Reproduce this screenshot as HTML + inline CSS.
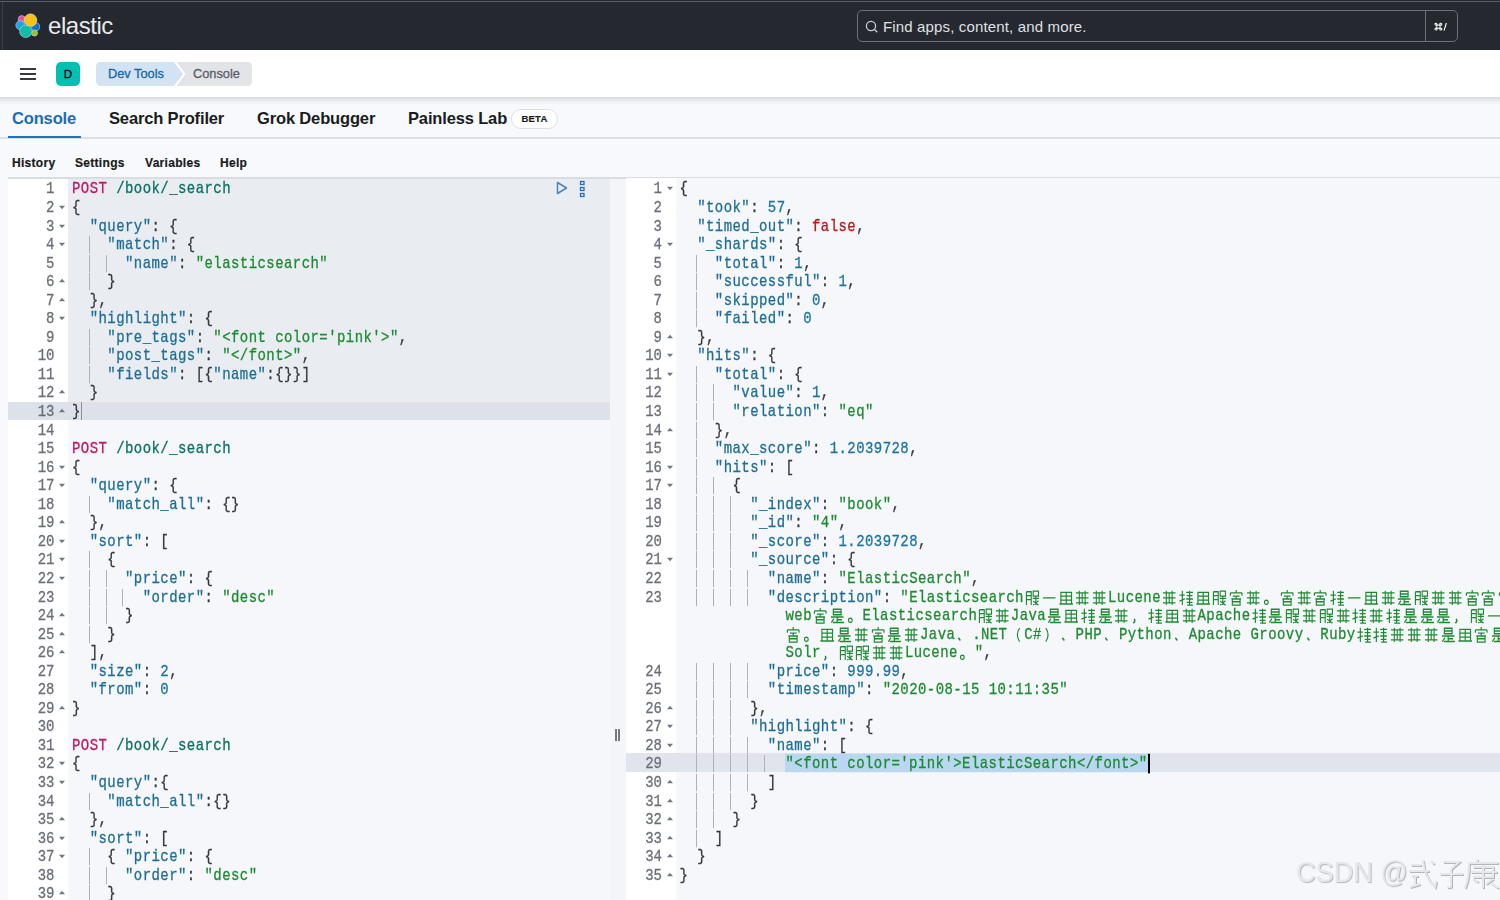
<!DOCTYPE html>
<html><head><meta charset="utf-8">
<style>
*{margin:0;padding:0;box-sizing:border-box}
html,body{width:1500px;height:900px;overflow:hidden;background:#f8f9fc;font-family:"Liberation Sans",sans-serif;position:relative}
.abs{position:absolute}
#hdr{position:absolute;left:0;top:0;width:1500px;height:50px;background:#25282f}
#hdr .topline{position:absolute;left:0;top:1px;width:1500px;height:1.2px;background:#5a5d63}
#hdr .leftline{position:absolute;left:1.5px;top:2px;width:1px;height:48px;background:#3a3d44}
#logo-t{position:absolute;left:48px;top:12px;font-size:24px;color:#e9eaec;letter-spacing:-0.45px}
#search{position:absolute;left:857px;top:10px;width:601px;height:32px;border:1.4px solid #6c7079;border-radius:5px;background:#25282f}
#search .div{position:absolute;left:567px;top:0;width:1.4px;height:100%;background:#6c7079}
#search .ph{position:absolute;left:25px;top:7px;font-size:15px;letter-spacing:0.15px;color:#dfe1e5}
#search .kbd{position:absolute;left:576px;top:7px;font-size:12px;color:#fff;font-weight:bold}
#sub{position:absolute;left:0;top:50px;width:1500px;height:47px;background:#fff;}
#shadow{position:absolute;left:0;top:97px;width:1500px;height:8px;background:linear-gradient(to bottom,rgba(40,45,60,.16) 0,rgba(40,45,60,.10) 2px,rgba(40,45,60,.04) 5px,rgba(40,45,60,0) 8px)}
.ham{position:absolute;left:20px;width:16px;height:2px;background:#37393f;margin-top:-0.2px}
#dbadge{position:absolute;left:56px;top:62px;width:24px;height:24px;border-radius:5px;background:#00bfb3;color:#000;font-size:11.6px;-webkit-text-stroke:0.35px #000;text-align:center;line-height:24px}
.crumb{position:absolute;top:62px;height:24px;line-height:24px;font-size:12.8px;-webkit-text-stroke:0.3px currentColor}
#tabs .t{position:absolute;top:109px;letter-spacing:-0.15px;font-size:16.5px;font-weight:bold;color:#1a1c21}
#tabs .on{color:#0b64dd;color:#1a6db8}
#tabline{position:absolute;left:0;top:137px;width:1500px;height:1.5px;background:#dcdfe4}
#tabul{position:absolute;left:8px;top:136px;width:73px;height:2px;background:#1a74c6}
#beta{position:absolute;left:511px;top:109px;width:47px;height:20px;border:1px solid #dcdfe5;border-radius:10px;background:#fff;font-size:9.5px;font-weight:bold;text-align:center;line-height:18px;letter-spacing:0.2px;color:#1a1c21;-webkit-text-stroke:0.2px #1a1c21}
.menu{position:absolute;top:155.5px;font-size:12px;letter-spacing:0.3px;-webkit-text-stroke:0.2px #1a1c21;font-weight:bold;color:#1a1c21}
/* editors */
.ed{position:absolute;top:177px;height:723px;overflow:hidden;border-top:1px solid #d9dce1}
#edtop{position:absolute;left:8px;top:177px;width:1492px;height:1.5px;background:#d9dce1}
#gap{position:absolute;left:610px;top:178px;width:16px;height:722px;background:#f3f5f9}
#edL{left:8px;width:602px;background:#f5f7fa}
#edR{left:626px;width:874px;background:#f5f7fa}
.gut{position:absolute;top:0;left:0;height:100%;background:#fff}
#edL .gut{width:60px}
#edR .gut{width:50px}
.lines{position:absolute;left:0;top:-177px;width:100%}
.ln{position:absolute;left:0;height:18.55px;line-height:18.55px;font-family:"Liberation Mono",monospace;font-size:14px;color:#6b6f77;white-space:pre}
.cl{position:absolute;height:18.55px;line-height:18.55px;font-family:"Liberation Mono",monospace;font-size:14px;letter-spacing:0.43px;color:#343741;white-space:pre}
#edL .ln{width:60px}
#edR .ln{width:50px}
#edL .num{position:absolute;right:13.5px}
#edR .num{position:absolute;right:14px}
.cl,.ln{transform:scaleY(1.15);transform-origin:50% 9px;-webkit-text-stroke:0.25px currentColor}
#edL .cl{left:64px}
#edR .cl{left:53.5px}
.f{position:absolute;right:3.5px;top:7.5px;width:0;height:0;border-left:3px solid transparent;border-right:3px solid transparent}
.f.d{border-top:3.5px solid #72767d}
.f.u{border-bottom:3.5px solid #72767d;top:6.5px}
.g{position:absolute;top:1.6px;width:1px;height:15.3px;background:#aeb2b8}
.k{color:#1f6d94}
.s{color:#1d8a31}
.n{color:#1c73a1}
.b{color:#b21818}
.m{color:#bf1863}
.u{color:#0b6f60}
.cj{display:inline-block;width:16.43px;height:18.55px;vertical-align:top;margin-right:0.4px}
.sel{background:#b9d7f0}
.cur{display:inline-block;width:2px;height:17px;background:#000;vertical-align:top;margin-top:1px}
#reqblk{position:absolute;left:60px;top:0;width:542px;height:241.15px;background:#e9edf2}
#actL{position:absolute;left:0;top:223.6px;width:602px;height:18.55px;background:#dde2ea}
#actR{position:absolute;left:0;top:575.1px;width:874px;height:18.55px;background:#e0e4ec}
#resz .bar{position:absolute;top:729px;width:1.7px;height:11.5px;background:#74787f}
#wm{position:absolute;left:1296px;top:856px;font-size:29px;transform:scaleX(0.935);transform-origin:0 0;color:#e6e7ea;text-shadow:1px 1px 1px #b4b5b9;white-space:nowrap}
</style></head><body>
<svg width="0" height="0" style="position:absolute">
<defs>
<symbol id="c0" viewBox="0 0 17 18"><path d="M2 9.5H15" stroke="currentColor" stroke-width="1.3" fill="none"/></symbol>
<symbol id="c1" viewBox="0 0 17 18"><path d="M3 4.5H14V15H3Z M3 8H14 M3 11.5H14 M8.5 4.5V15 M1.5 15H15.5" stroke="currentColor" stroke-width="1.2" fill="none"/></symbol>
<symbol id="c2" viewBox="0 0 17 18"><path d="M4.5 3.5H12.5V8.5H4.5Z M4.5 6H12.5 M2 10.5H15 M8.5 10.5V15.5 M8.5 13H13.5 M5 12L2.5 15.5 M4 15.5H15.5" stroke="currentColor" stroke-width="1.25" fill="none"/></symbol>
<symbol id="c3" viewBox="0 0 17 18"><path d="M4.5 3V16 M1.5 7H7 M1.5 12.5L7 10.5 M8.5 4.5H15.5 M12 3V7 M9 7.5H15 M8.5 10.5H15.5 M12 7.5V16 M9 13.5H15 M9.5 16H15.5" stroke="currentColor" stroke-width="1.2" fill="none"/></symbol>
<symbol id="c4" viewBox="0 0 17 18"><path d="M8.5 2.5V4.5 M2.5 5H14.5 M2.5 5V7.5 M14.5 5V7.5 M5 8H12 M8.5 8V10 M3.5 10.5H13.5 M4.5 10.5V16H12.5V10.5 M4.5 13H12.5" stroke="currentColor" stroke-width="1.2" fill="none"/></symbol>
<symbol id="c5" viewBox="0 0 17 18"><path d="M2 5H15 M2 9.5H15 M2 14H15 M5.5 3V16 M11.5 3V16 M8.5 5V14" stroke="currentColor" stroke-width="1.15" fill="none"/></symbol>
<symbol id="c6" viewBox="0 0 17 18"><path d="M2.5 4H7.5V16 M2.5 4V16 M2.5 7.5H7.5 M2.5 11H7.5 M9.5 3.5H15V8H9.5Z M9 10H15.5 M12.2 8V16 M9.5 16L15 12 M9.5 12.5L15 16" stroke="currentColor" stroke-width="1.15" fill="none"/></symbol>
<symbol id="cp" viewBox="0 0 17 18"><circle cx="4.5" cy="13.5" r="1.9" stroke="currentColor" stroke-width="1.1" fill="none"/></symbol>
<symbol id="cc" viewBox="0 0 17 18"><path d="M4 12.5Q5.5 13 4.8 14.5L3.5 16" stroke="currentColor" stroke-width="1.5" fill="none"/></symbol>
<symbol id="ct" viewBox="0 0 17 18"><path d="M3.5 12L5.5 14.5" stroke="currentColor" stroke-width="1.5" fill="none"/></symbol>
<symbol id="lp" viewBox="0 0 17 18"><path d="M13 3.5Q8.5 9.5 13 15.5" stroke="currentColor" stroke-width="1.2" fill="none"/></symbol>
<symbol id="rp" viewBox="0 0 17 18"><path d="M4 3.5Q8.5 9.5 4 15.5" stroke="currentColor" stroke-width="1.2" fill="none"/></symbol>
</defs></svg>
<div id="hdr">
  <div class="topline"></div><div class="leftline"></div>
  <svg style="position:absolute;left:0;top:0" width="50" height="50">
    <g stroke="#cfe9f3" stroke-width="0.6" stroke-opacity="0.8">
    <circle cx="21.7" cy="19.2" r="3.6" fill="#e8509a"/>
    <circle cx="20.4" cy="25.3" r="4.6" fill="#1ea5e8"/>
    <circle cx="35.6" cy="26.8" r="4.1" fill="#0f72cc"/>
    <circle cx="34.5" cy="33" r="3.1" fill="#9bc21c"/>
    <circle cx="30.5" cy="20.2" r="6.4" fill="#f9c11b"/>
    <circle cx="25.8" cy="31.4" r="6.2" fill="#13bba9"/>
    </g>
  </svg>
  <div id="logo-t">elastic</div>
  <div id="search"><svg style="position:absolute;left:7px;top:9px" width="14" height="14" viewBox="0 0 14 14"><circle cx="6" cy="6" r="4.6" fill="none" stroke="#c9ccd2" stroke-width="1.3"/><path d="M9.3 9.3 L12.3 12.3" stroke="#c9ccd2" stroke-width="1.3"/></svg><div class="ph">Find apps, content, and more.</div><div class="div"></div><svg style="position:absolute;left:576px;top:11px" width="16" height="10" viewBox="0 0 20 12"><g fill="none" stroke="#fff" stroke-width="1.3"><path d="M3.5 3.5H7.5V7.5H3.5Z"/><circle cx="2.5" cy="2.5" r="1.3"/><circle cx="8.5" cy="2.5" r="1.3"/><circle cx="2.5" cy="8.5" r="1.3"/><circle cx="8.5" cy="8.5" r="1.3"/></g><path d="M15.5 1L12.5 10.5" stroke="#fff" stroke-width="1.4"/></svg></div>
</div>
<div id="sub"></div><div id="shadow"></div>
<div class="ham" style="top:68px"></div><div class="ham" style="top:73px"></div><div class="ham" style="top:78px"></div>
<div id="dbadge">D</div>
<svg style="position:absolute;left:96px;top:62px" width="160" height="24">
  <path d="M5 0 H78 L87 12 L78 24 H5 Q0 24 0 19 V5 Q0 0 5 0Z" fill="#d2e4f3"/>
  <path d="M80.5 0 H151 Q156 0 156 5 V19 Q156 24 151 24 H80.5 L89.5 12 Z" fill="#e3e4e8"/>
</svg>
<div class="crumb" style="left:108px;color:#1a64a8">Dev Tools</div>
<div class="crumb" style="left:193px;color:#5a606b">Console</div>
<div id="tabs">
 <div class="t on" style="left:12px">Console</div>
 <div class="t" style="left:109px">Search Profiler</div>
 <div class="t" style="left:257px">Grok Debugger</div>
 <div class="t" style="left:408px">Painless Lab</div>
</div>
<div id="beta">BETA</div>
<div id="tabline"></div><div id="tabul"></div>
<div class="menu" style="left:12px">History</div>
<div class="menu" style="left:75px">Settings</div>
<div class="menu" style="left:145px">Variables</div>
<div class="menu" style="left:220px">Help</div>

<div id="edL" class="ed">
 <div id="reqblk"></div>
 <div class="gut"></div>
 <div id="actL"></div><div style="position:absolute;left:73px;top:224px;width:1.3px;height:18px;background:#8a8e95"></div>
 <div class="lines">
<div class="ln" style="top:178.40px"><span class="num">1</span></div>
<div class="cl" style="top:178.40px"><span class="m">POST</span> <span class="u">/book/_search</span></div>
<div class="ln" style="top:196.95px"><span class="num">2</span><b class="f d"></b></div>
<div class="cl" style="top:196.95px">{</div>
<div class="ln" style="top:215.50px"><span class="num">3</span><b class="f d"></b></div>
<div class="cl" style="top:215.50px">  <span class="k">&quot;query&quot;</span>: {</div>
<div class="ln" style="top:234.05px"><span class="num">4</span><b class="f d"></b></div>
<div class="cl" style="top:234.05px"><i class="g" style="left:16.7px"></i>    <span class="k">&quot;match&quot;</span>: {</div>
<div class="ln" style="top:252.60px"><span class="num">5</span></div>
<div class="cl" style="top:252.60px"><i class="g" style="left:16.7px"></i><i class="g" style="left:33.5px"></i>      <span class="k">&quot;name&quot;</span>: <span class="s">&quot;elasticsearch&quot;</span></div>
<div class="ln" style="top:271.15px"><span class="num">6</span><b class="f u"></b></div>
<div class="cl" style="top:271.15px"><i class="g" style="left:16.7px"></i>    }</div>
<div class="ln" style="top:289.70px"><span class="num">7</span><b class="f u"></b></div>
<div class="cl" style="top:289.70px">  },</div>
<div class="ln" style="top:308.25px"><span class="num">8</span><b class="f d"></b></div>
<div class="cl" style="top:308.25px">  <span class="k">&quot;highlight&quot;</span>: {</div>
<div class="ln" style="top:326.80px"><span class="num">9</span></div>
<div class="cl" style="top:326.80px"><i class="g" style="left:16.7px"></i>    <span class="k">&quot;pre_tags&quot;</span>: <span class="s">&quot;&lt;font color=&#x27;pink&#x27;&gt;&quot;</span>,</div>
<div class="ln" style="top:345.35px"><span class="num">10</span></div>
<div class="cl" style="top:345.35px"><i class="g" style="left:16.7px"></i>    <span class="k">&quot;post_tags&quot;</span>: <span class="s">&quot;&lt;/font&gt;&quot;</span>,</div>
<div class="ln" style="top:363.90px"><span class="num">11</span></div>
<div class="cl" style="top:363.90px"><i class="g" style="left:16.7px"></i>    <span class="k">&quot;fields&quot;</span>: [{<span class="k">&quot;name&quot;</span>:{}}]</div>
<div class="ln" style="top:382.45px"><span class="num">12</span><b class="f u"></b></div>
<div class="cl" style="top:382.45px">  }</div>
<div class="ln" style="top:401.00px"><span class="num">13</span><b class="f u"></b></div>
<div class="cl" style="top:401.00px">}</div>
<div class="ln" style="top:419.55px"><span class="num">14</span></div>
<div class="cl" style="top:419.55px"></div>
<div class="ln" style="top:438.10px"><span class="num">15</span></div>
<div class="cl" style="top:438.10px"><span class="m">POST</span> <span class="u">/book/_search</span></div>
<div class="ln" style="top:456.65px"><span class="num">16</span><b class="f d"></b></div>
<div class="cl" style="top:456.65px">{</div>
<div class="ln" style="top:475.20px"><span class="num">17</span><b class="f d"></b></div>
<div class="cl" style="top:475.20px">  <span class="k">&quot;query&quot;</span>: {</div>
<div class="ln" style="top:493.75px"><span class="num">18</span></div>
<div class="cl" style="top:493.75px"><i class="g" style="left:16.7px"></i>    <span class="k">&quot;match_all&quot;</span>: {}</div>
<div class="ln" style="top:512.30px"><span class="num">19</span><b class="f u"></b></div>
<div class="cl" style="top:512.30px">  },</div>
<div class="ln" style="top:530.85px"><span class="num">20</span><b class="f d"></b></div>
<div class="cl" style="top:530.85px">  <span class="k">&quot;sort&quot;</span>: [</div>
<div class="ln" style="top:549.40px"><span class="num">21</span><b class="f d"></b></div>
<div class="cl" style="top:549.40px"><i class="g" style="left:16.7px"></i>    {</div>
<div class="ln" style="top:567.95px"><span class="num">22</span><b class="f d"></b></div>
<div class="cl" style="top:567.95px"><i class="g" style="left:16.7px"></i><i class="g" style="left:33.5px"></i>      <span class="k">&quot;price&quot;</span>: {</div>
<div class="ln" style="top:586.50px"><span class="num">23</span></div>
<div class="cl" style="top:586.50px"><i class="g" style="left:16.7px"></i><i class="g" style="left:33.5px"></i><i class="g" style="left:50.4px"></i>        <span class="k">&quot;order&quot;</span>: <span class="s">&quot;desc&quot;</span></div>
<div class="ln" style="top:605.05px"><span class="num">24</span><b class="f u"></b></div>
<div class="cl" style="top:605.05px"><i class="g" style="left:16.7px"></i><i class="g" style="left:33.5px"></i>      }</div>
<div class="ln" style="top:623.60px"><span class="num">25</span><b class="f u"></b></div>
<div class="cl" style="top:623.60px"><i class="g" style="left:16.7px"></i>    }</div>
<div class="ln" style="top:642.15px"><span class="num">26</span><b class="f u"></b></div>
<div class="cl" style="top:642.15px">  ],</div>
<div class="ln" style="top:660.70px"><span class="num">27</span></div>
<div class="cl" style="top:660.70px">  <span class="k">&quot;size&quot;</span>: <span class="n">2</span>,</div>
<div class="ln" style="top:679.25px"><span class="num">28</span></div>
<div class="cl" style="top:679.25px">  <span class="k">&quot;from&quot;</span>: <span class="n">0</span></div>
<div class="ln" style="top:697.80px"><span class="num">29</span><b class="f u"></b></div>
<div class="cl" style="top:697.80px">}</div>
<div class="ln" style="top:716.35px"><span class="num">30</span></div>
<div class="cl" style="top:716.35px"></div>
<div class="ln" style="top:734.90px"><span class="num">31</span></div>
<div class="cl" style="top:734.90px"><span class="m">POST</span> <span class="u">/book/_search</span></div>
<div class="ln" style="top:753.45px"><span class="num">32</span><b class="f d"></b></div>
<div class="cl" style="top:753.45px">{</div>
<div class="ln" style="top:772.00px"><span class="num">33</span><b class="f d"></b></div>
<div class="cl" style="top:772.00px">  <span class="k">&quot;query&quot;</span>:{</div>
<div class="ln" style="top:790.55px"><span class="num">34</span></div>
<div class="cl" style="top:790.55px"><i class="g" style="left:16.7px"></i>    <span class="k">&quot;match_all&quot;</span>:{}</div>
<div class="ln" style="top:809.10px"><span class="num">35</span><b class="f u"></b></div>
<div class="cl" style="top:809.10px">  },</div>
<div class="ln" style="top:827.65px"><span class="num">36</span><b class="f d"></b></div>
<div class="cl" style="top:827.65px">  <span class="k">&quot;sort&quot;</span>: [</div>
<div class="ln" style="top:846.20px"><span class="num">37</span><b class="f d"></b></div>
<div class="cl" style="top:846.20px"><i class="g" style="left:16.7px"></i>    { <span class="k">&quot;price&quot;</span>: {</div>
<div class="ln" style="top:864.75px"><span class="num">38</span></div>
<div class="cl" style="top:864.75px"><i class="g" style="left:16.7px"></i><i class="g" style="left:33.5px"></i>      <span class="k">&quot;order&quot;</span>: <span class="s">&quot;desc&quot;</span></div>
<div class="ln" style="top:883.30px"><span class="num">39</span><b class="f u"></b></div>
<div class="cl" style="top:883.30px"><i class="g" style="left:16.7px"></i>    }</div>
 </div>
 <svg style="position:absolute;left:548px;top:2px" width="30" height="20">
  <path d="M1.5 2.5 L1.5 13.5 L10.5 8 Z" fill="none" stroke="#4a83c0" stroke-width="1.5" stroke-linejoin="round"/>
  <rect x="24.5" y="1.5" width="3.5" height="3" fill="none" stroke="#2a6db0" stroke-width="1.3"/>
  <rect x="24.5" y="7.5" width="3.5" height="3" fill="none" stroke="#2a6db0" stroke-width="1.3"/>
  <rect x="24.5" y="13.5" width="3.5" height="3" fill="none" stroke="#2a6db0" stroke-width="1.3"/>
 </svg>
</div>
<div id="gap"></div><div id="edtop"></div><div id="resz"><div class="bar" style="left:615px"></div><div class="bar" style="left:618px"></div></div>
<div id="edR" class="ed">
 <div class="gut"></div>
 <div id="actR"></div>
 <div class="lines">
<div class="ln" style="top:178.40px"><span class="num">1</span><b class="f d"></b></div>
<div class="cl" style="top:178.40px">{</div>
<div class="ln" style="top:196.95px"><span class="num">2</span></div>
<div class="cl" style="top:196.95px">  <span class="k">&quot;took&quot;</span>: <span class="n">57</span>,</div>
<div class="ln" style="top:215.50px"><span class="num">3</span></div>
<div class="cl" style="top:215.50px">  <span class="k">&quot;timed_out&quot;</span>: <span class="b">false</span>,</div>
<div class="ln" style="top:234.05px"><span class="num">4</span><b class="f d"></b></div>
<div class="cl" style="top:234.05px">  <span class="k">&quot;_shards&quot;</span>: {</div>
<div class="ln" style="top:252.60px"><span class="num">5</span></div>
<div class="cl" style="top:252.60px"><i class="g" style="left:16.7px"></i>    <span class="k">&quot;total&quot;</span>: <span class="n">1</span>,</div>
<div class="ln" style="top:271.15px"><span class="num">6</span></div>
<div class="cl" style="top:271.15px"><i class="g" style="left:16.7px"></i>    <span class="k">&quot;successful&quot;</span>: <span class="n">1</span>,</div>
<div class="ln" style="top:289.70px"><span class="num">7</span></div>
<div class="cl" style="top:289.70px"><i class="g" style="left:16.7px"></i>    <span class="k">&quot;skipped&quot;</span>: <span class="n">0</span>,</div>
<div class="ln" style="top:308.25px"><span class="num">8</span></div>
<div class="cl" style="top:308.25px"><i class="g" style="left:16.7px"></i>    <span class="k">&quot;failed&quot;</span>: <span class="n">0</span></div>
<div class="ln" style="top:326.80px"><span class="num">9</span><b class="f u"></b></div>
<div class="cl" style="top:326.80px">  },</div>
<div class="ln" style="top:345.35px"><span class="num">10</span><b class="f d"></b></div>
<div class="cl" style="top:345.35px">  <span class="k">&quot;hits&quot;</span>: {</div>
<div class="ln" style="top:363.90px"><span class="num">11</span><b class="f d"></b></div>
<div class="cl" style="top:363.90px"><i class="g" style="left:16.7px"></i>    <span class="k">&quot;total&quot;</span>: {</div>
<div class="ln" style="top:382.45px"><span class="num">12</span></div>
<div class="cl" style="top:382.45px"><i class="g" style="left:16.7px"></i><i class="g" style="left:33.5px"></i>      <span class="k">&quot;value&quot;</span>: <span class="n">1</span>,</div>
<div class="ln" style="top:401.00px"><span class="num">13</span></div>
<div class="cl" style="top:401.00px"><i class="g" style="left:16.7px"></i><i class="g" style="left:33.5px"></i>      <span class="k">&quot;relation&quot;</span>: <span class="s">&quot;eq&quot;</span></div>
<div class="ln" style="top:419.55px"><span class="num">14</span><b class="f u"></b></div>
<div class="cl" style="top:419.55px"><i class="g" style="left:16.7px"></i>    },</div>
<div class="ln" style="top:438.10px"><span class="num">15</span></div>
<div class="cl" style="top:438.10px"><i class="g" style="left:16.7px"></i>    <span class="k">&quot;max_score&quot;</span>: <span class="n">1.2039728</span>,</div>
<div class="ln" style="top:456.65px"><span class="num">16</span><b class="f d"></b></div>
<div class="cl" style="top:456.65px"><i class="g" style="left:16.7px"></i>    <span class="k">&quot;hits&quot;</span>: [</div>
<div class="ln" style="top:475.20px"><span class="num">17</span><b class="f d"></b></div>
<div class="cl" style="top:475.20px"><i class="g" style="left:16.7px"></i><i class="g" style="left:33.5px"></i>      {</div>
<div class="ln" style="top:493.75px"><span class="num">18</span></div>
<div class="cl" style="top:493.75px"><i class="g" style="left:16.7px"></i><i class="g" style="left:33.5px"></i><i class="g" style="left:50.4px"></i>        <span class="k">&quot;_index&quot;</span>: <span class="s">&quot;book&quot;</span>,</div>
<div class="ln" style="top:512.30px"><span class="num">19</span></div>
<div class="cl" style="top:512.30px"><i class="g" style="left:16.7px"></i><i class="g" style="left:33.5px"></i><i class="g" style="left:50.4px"></i>        <span class="k">&quot;_id&quot;</span>: <span class="s">&quot;4&quot;</span>,</div>
<div class="ln" style="top:530.85px"><span class="num">20</span></div>
<div class="cl" style="top:530.85px"><i class="g" style="left:16.7px"></i><i class="g" style="left:33.5px"></i><i class="g" style="left:50.4px"></i>        <span class="k">&quot;_score&quot;</span>: <span class="n">1.2039728</span>,</div>
<div class="ln" style="top:549.40px"><span class="num">21</span><b class="f d"></b></div>
<div class="cl" style="top:549.40px"><i class="g" style="left:16.7px"></i><i class="g" style="left:33.5px"></i><i class="g" style="left:50.4px"></i>        <span class="k">&quot;_source&quot;</span>: {</div>
<div class="ln" style="top:567.95px"><span class="num">22</span></div>
<div class="cl" style="top:567.95px"><i class="g" style="left:16.7px"></i><i class="g" style="left:33.5px"></i><i class="g" style="left:50.4px"></i><i class="g" style="left:67.2px"></i>          <span class="k">&quot;name&quot;</span>: <span class="s">&quot;ElasticSearch&quot;</span>,</div>
<div class="ln" style="top:586.50px"><span class="num">23</span></div>
<div class="cl" style="top:586.50px"><i class="g" style="left:16.7px"></i><i class="g" style="left:33.5px"></i><i class="g" style="left:50.4px"></i><i class="g" style="left:67.2px"></i>          <span class="k">"description"</span>: <span class="s">&quot;Elasticsearch</span><svg class="cj s" viewBox="0 0 17 18"><use href="#c6"/></svg><svg class="cj s" viewBox="0 0 17 18"><use href="#c0"/></svg><svg class="cj s" viewBox="0 0 17 18"><use href="#c1"/></svg><svg class="cj s" viewBox="0 0 17 18"><use href="#c5"/></svg><svg class="cj s" viewBox="0 0 17 18"><use href="#c5"/></svg><span class="s">Lucene</span><svg class="cj s" viewBox="0 0 17 18"><use href="#c5"/></svg><svg class="cj s" viewBox="0 0 17 18"><use href="#c3"/></svg><svg class="cj s" viewBox="0 0 17 18"><use href="#c1"/></svg><svg class="cj s" viewBox="0 0 17 18"><use href="#c6"/></svg><svg class="cj s" viewBox="0 0 17 18"><use href="#c4"/></svg><svg class="cj s" viewBox="0 0 17 18"><use href="#c5"/></svg><svg class="cj s" viewBox="0 0 17 18"><use href="#cp"/></svg><svg class="cj s" viewBox="0 0 17 18"><use href="#c4"/></svg><svg class="cj s" viewBox="0 0 17 18"><use href="#c5"/></svg><svg class="cj s" viewBox="0 0 17 18"><use href="#c4"/></svg><svg class="cj s" viewBox="0 0 17 18"><use href="#c3"/></svg><svg class="cj s" viewBox="0 0 17 18"><use href="#c0"/></svg><svg class="cj s" viewBox="0 0 17 18"><use href="#c1"/></svg><svg class="cj s" viewBox="0 0 17 18"><use href="#c5"/></svg><svg class="cj s" viewBox="0 0 17 18"><use href="#c2"/></svg><svg class="cj s" viewBox="0 0 17 18"><use href="#c6"/></svg><svg class="cj s" viewBox="0 0 17 18"><use href="#c5"/></svg><svg class="cj s" viewBox="0 0 17 18"><use href="#c5"/></svg><svg class="cj s" viewBox="0 0 17 18"><use href="#c4"/></svg><svg class="cj s" viewBox="0 0 17 18"><use href="#c4"/></svg><svg class="cj s" viewBox="0 0 17 18"><use href="#c4"/></svg><svg class="cj s" viewBox="0 0 17 18"><use href="#c5"/></svg><svg class="cj s" viewBox="0 0 17 18"><use href="#c3"/></svg><svg class="cj s" viewBox="0 0 17 18"><use href="#c6"/></svg><svg class="cj s" viewBox="0 0 17 18"><use href="#c3"/></svg><svg class="cj s" viewBox="0 0 17 18"><use href="#c1"/></svg><svg class="cj s" viewBox="0 0 17 18"><use href="#c6"/></svg><svg class="cj s" viewBox="0 0 17 18"><use href="#c1"/></svg><svg class="cj s" viewBox="0 0 17 18"><use href="#cc"/></svg><svg class="cj s" viewBox="0 0 17 18"><use href="#c5"/></svg><svg class="cj s" viewBox="0 0 17 18"><use href="#c5"/></svg><span class="s">RESTful</span></div>
<div class="cl" style="top:605.05px">            <span class="s">web</span><svg class="cj s" viewBox="0 0 17 18"><use href="#c4"/></svg><svg class="cj s" viewBox="0 0 17 18"><use href="#c2"/></svg><svg class="cj s" viewBox="0 0 17 18"><use href="#cp"/></svg><span class="s">Elasticsearch</span><svg class="cj s" viewBox="0 0 17 18"><use href="#c6"/></svg><svg class="cj s" viewBox="0 0 17 18"><use href="#c5"/></svg><span class="s">Java</span><svg class="cj s" viewBox="0 0 17 18"><use href="#c2"/></svg><svg class="cj s" viewBox="0 0 17 18"><use href="#c1"/></svg><svg class="cj s" viewBox="0 0 17 18"><use href="#c3"/></svg><svg class="cj s" viewBox="0 0 17 18"><use href="#c2"/></svg><svg class="cj s" viewBox="0 0 17 18"><use href="#c5"/></svg><svg class="cj s" viewBox="0 0 17 18"><use href="#cc"/></svg><svg class="cj s" viewBox="0 0 17 18"><use href="#c3"/></svg><svg class="cj s" viewBox="0 0 17 18"><use href="#c1"/></svg><svg class="cj s" viewBox="0 0 17 18"><use href="#c5"/></svg><span class="s">Apache</span><svg class="cj s" viewBox="0 0 17 18"><use href="#c3"/></svg><svg class="cj s" viewBox="0 0 17 18"><use href="#c2"/></svg><svg class="cj s" viewBox="0 0 17 18"><use href="#c6"/></svg><svg class="cj s" viewBox="0 0 17 18"><use href="#c5"/></svg><svg class="cj s" viewBox="0 0 17 18"><use href="#c6"/></svg><svg class="cj s" viewBox="0 0 17 18"><use href="#c5"/></svg><svg class="cj s" viewBox="0 0 17 18"><use href="#c3"/></svg><svg class="cj s" viewBox="0 0 17 18"><use href="#c5"/></svg><svg class="cj s" viewBox="0 0 17 18"><use href="#c3"/></svg><svg class="cj s" viewBox="0 0 17 18"><use href="#c2"/></svg><svg class="cj s" viewBox="0 0 17 18"><use href="#c2"/></svg><svg class="cj s" viewBox="0 0 17 18"><use href="#c2"/></svg><svg class="cj s" viewBox="0 0 17 18"><use href="#cc"/></svg><svg class="cj s" viewBox="0 0 17 18"><use href="#c6"/></svg><svg class="cj s" viewBox="0 0 17 18"><use href="#c0"/></svg><svg class="cj s" viewBox="0 0 17 18"><use href="#c6"/></svg><svg class="cj s" viewBox="0 0 17 18"><use href="#c4"/></svg><svg class="cj s" viewBox="0 0 17 18"><use href="#c3"/></svg><svg class="cj s" viewBox="0 0 17 18"><use href="#c5"/></svg><svg class="cj s" viewBox="0 0 17 18"><use href="#c6"/></svg><svg class="cj s" viewBox="0 0 17 18"><use href="#c3"/></svg><svg class="cj s" viewBox="0 0 17 18"><use href="#c6"/></svg><svg class="cj s" viewBox="0 0 17 18"><use href="#c3"/></svg><svg class="cj s" viewBox="0 0 17 18"><use href="#c1"/></svg><svg class="cj s" viewBox="0 0 17 18"><use href="#c6"/></svg><svg class="cj s" viewBox="0 0 17 18"><use href="#c1"/></svg><svg class="cj s" viewBox="0 0 17 18"><use href="#cp"/></svg></div>
<div class="cl" style="top:623.60px">            <svg class="cj s" viewBox="0 0 17 18"><use href="#c4"/></svg><svg class="cj s" viewBox="0 0 17 18"><use href="#cp"/></svg><svg class="cj s" viewBox="0 0 17 18"><use href="#c1"/></svg><svg class="cj s" viewBox="0 0 17 18"><use href="#c2"/></svg><svg class="cj s" viewBox="0 0 17 18"><use href="#c5"/></svg><svg class="cj s" viewBox="0 0 17 18"><use href="#c4"/></svg><svg class="cj s" viewBox="0 0 17 18"><use href="#c2"/></svg><svg class="cj s" viewBox="0 0 17 18"><use href="#c5"/></svg><span class="s">Java</span><svg class="cj s" viewBox="0 0 17 18"><use href="#ct"/></svg><span class="s">.NET</span><svg class="cj s" viewBox="0 0 17 18"><use href="#lp"/></svg><span class="s">C#</span><svg class="cj s" viewBox="0 0 17 18"><use href="#rp"/></svg><svg class="cj s" viewBox="0 0 17 18"><use href="#ct"/></svg><span class="s">PHP</span><svg class="cj s" viewBox="0 0 17 18"><use href="#ct"/></svg><span class="s">Python</span><svg class="cj s" viewBox="0 0 17 18"><use href="#ct"/></svg><span class="s">Apache Groovy</span><svg class="cj s" viewBox="0 0 17 18"><use href="#ct"/></svg><span class="s">Ruby</span><svg class="cj s" viewBox="0 0 17 18"><use href="#c3"/></svg><svg class="cj s" viewBox="0 0 17 18"><use href="#c3"/></svg><svg class="cj s" viewBox="0 0 17 18"><use href="#c5"/></svg><svg class="cj s" viewBox="0 0 17 18"><use href="#c5"/></svg><svg class="cj s" viewBox="0 0 17 18"><use href="#c5"/></svg><svg class="cj s" viewBox="0 0 17 18"><use href="#c2"/></svg><svg class="cj s" viewBox="0 0 17 18"><use href="#c1"/></svg><svg class="cj s" viewBox="0 0 17 18"><use href="#c4"/></svg><svg class="cj s" viewBox="0 0 17 18"><use href="#c2"/></svg><svg class="cj s" viewBox="0 0 17 18"><use href="#c6"/></svg><svg class="cj s" viewBox="0 0 17 18"><use href="#c2"/></svg><svg class="cj s" viewBox="0 0 17 18"><use href="#c5"/></svg><svg class="cj s" viewBox="0 0 17 18"><use href="#c5"/></svg><svg class="cj s" viewBox="0 0 17 18"><use href="#cp"/></svg><svg class="cj s" viewBox="0 0 17 18"><use href="#c6"/></svg><svg class="cj s" viewBox="0 0 17 18"><use href="#c3"/></svg><span class="s">DB-Engines</span></div>
<div class="cl" style="top:642.15px">            <span class="s">Solr</span><svg class="cj s" viewBox="0 0 17 18"><use href="#cc"/></svg><svg class="cj s" viewBox="0 0 17 18"><use href="#c6"/></svg><svg class="cj s" viewBox="0 0 17 18"><use href="#c6"/></svg><svg class="cj s" viewBox="0 0 17 18"><use href="#c5"/></svg><svg class="cj s" viewBox="0 0 17 18"><use href="#c5"/></svg><span class="s">Lucene</span><svg class="cj s" viewBox="0 0 17 18"><use href="#cp"/></svg><span class="s">&quot;</span>,</div>
<div class="ln" style="top:660.70px"><span class="num">24</span></div>
<div class="cl" style="top:660.70px"><i class="g" style="left:16.7px"></i><i class="g" style="left:33.5px"></i><i class="g" style="left:50.4px"></i><i class="g" style="left:67.2px"></i>          <span class="k">&quot;price&quot;</span>: <span class="n">999.99</span>,</div>
<div class="ln" style="top:679.25px"><span class="num">25</span></div>
<div class="cl" style="top:679.25px"><i class="g" style="left:16.7px"></i><i class="g" style="left:33.5px"></i><i class="g" style="left:50.4px"></i><i class="g" style="left:67.2px"></i>          <span class="k">&quot;timestamp&quot;</span>: <span class="s">&quot;2020-08-15 10:11:35&quot;</span></div>
<div class="ln" style="top:697.80px"><span class="num">26</span><b class="f u"></b></div>
<div class="cl" style="top:697.80px"><i class="g" style="left:16.7px"></i><i class="g" style="left:33.5px"></i><i class="g" style="left:50.4px"></i>        },</div>
<div class="ln" style="top:716.35px"><span class="num">27</span><b class="f d"></b></div>
<div class="cl" style="top:716.35px"><i class="g" style="left:16.7px"></i><i class="g" style="left:33.5px"></i><i class="g" style="left:50.4px"></i>        <span class="k">&quot;highlight&quot;</span>: {</div>
<div class="ln" style="top:734.90px"><span class="num">28</span><b class="f d"></b></div>
<div class="cl" style="top:734.90px"><i class="g" style="left:16.7px"></i><i class="g" style="left:33.5px"></i><i class="g" style="left:50.4px"></i><i class="g" style="left:67.2px"></i>          <span class="k">&quot;name&quot;</span>: [</div>
<div class="ln" style="top:753.45px"><span class="num">29</span></div>
<div class="cl" style="top:753.45px"><i class="g" style="left:16.7px"></i><i class="g" style="left:33.5px"></i><i class="g" style="left:50.4px"></i><i class="g" style="left:67.2px"></i><i class="g" style="left:84.1px"></i>            <span class="s sel">"&lt;font color='pink'&gt;ElasticSearch&lt;/font&gt;"</span><i class="cur"></i></div>
<div class="ln" style="top:772.00px"><span class="num">30</span><b class="f u"></b></div>
<div class="cl" style="top:772.00px"><i class="g" style="left:16.7px"></i><i class="g" style="left:33.5px"></i><i class="g" style="left:50.4px"></i><i class="g" style="left:67.2px"></i>          ]</div>
<div class="ln" style="top:790.55px"><span class="num">31</span><b class="f u"></b></div>
<div class="cl" style="top:790.55px"><i class="g" style="left:16.7px"></i><i class="g" style="left:33.5px"></i><i class="g" style="left:50.4px"></i>        }</div>
<div class="ln" style="top:809.10px"><span class="num">32</span><b class="f u"></b></div>
<div class="cl" style="top:809.10px"><i class="g" style="left:16.7px"></i><i class="g" style="left:33.5px"></i>      }</div>
<div class="ln" style="top:827.65px"><span class="num">33</span><b class="f u"></b></div>
<div class="cl" style="top:827.65px"><i class="g" style="left:16.7px"></i>    ]</div>
<div class="ln" style="top:846.20px"><span class="num">34</span><b class="f u"></b></div>
<div class="cl" style="top:846.20px">  }</div>
<div class="ln" style="top:864.75px"><span class="num">35</span><b class="f u"></b></div>
<div class="cl" style="top:864.75px">}</div>
 </div>
</div>
<div id="wm">CSDN @</div>
<svg style="position:absolute;left:1407px;top:857px;filter:drop-shadow(1px 1px 0.6px #b4b5b9)" width="95" height="34" viewBox="0 0 95 34"><g fill="none" stroke="#e6e7ea" stroke-width="2">
<path d="M4 8H14 M2 14H22 M5 19H11 M8 19V29 M3 30L13 27 M16 3Q17 20 28 30 L29 24 M24 4L27 7"/>
<path d="M36 5H52L44 12 M44 12V29Q44 31 40 30 M33 17H56"/>
<path d="M70 2V5 M62 6H91 M62 6Q62 22 58 31 M66 10H86V20H66 M64 15H90 M76 8V31 M66 22L71 25 M86 22L79 27 M84 26L91 31"/>
</g></svg>
</body></html>
